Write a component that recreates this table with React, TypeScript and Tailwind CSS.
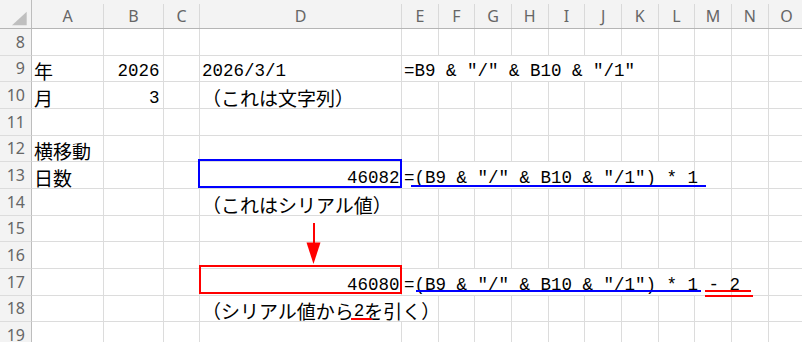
const MONO = "font-[family-name:'Liberation_Mono',monospace] text-[17.5px] leading-[20px]";
const JP = "font-[family-name:'Noto_Sans_CJK_JP',sans-serif] text-[19px] leading-[20px]";

const SPAN: Record<number, string> = {
  1: "col-span-1",
  2: "col-span-2",
  7: "col-span-7",
  8: "col-span-8",
  9: "col-span-9",
};

type Seg = { t: string; jp?: boolean };
type Cell = { span?: number; segs?: Seg[]; right?: string };

const m = (t: string): Seg => ({ t });
const j = (t: string): Seg => ({ t, jp: true });
const blank = (n: number): Cell[] => Array.from({ length: n }, () => ({}));

const letters = ["A", "B", "C", "D", "E", "F", "G", "H", "I", "J", "K", "L", "M", "N", "O"];

const rows: { n: number; cells: Cell[] }[] = [
  { n: 8, cells: blank(15) },
  {
    n: 9,
    cells: [
      { segs: [j("年")] },
      { segs: [m("2026")], right: "pr-[3.5px]" },
      {},
      { segs: [m("2026/3/1")] },
      { span: 7, segs: [m('=B9 & "/" & B10 & "/1"')] },
      ...blank(4),
    ],
  },
  {
    n: 10,
    cells: [
      { segs: [j("月")] },
      { segs: [m("3")], right: "pr-[3.5px]" },
      {},
      { segs: [j("（これは文字列）")] },
      ...blank(11),
    ],
  },
  { n: 11, cells: blank(15) },
  { n: 12, cells: [{ segs: [j("横移動")] }, ...blank(14)] },
  {
    n: 13,
    cells: [
      { segs: [j("日数")] },
      {},
      {},
      { segs: [m("46082")], right: "pr-[1.5px]" },
      { span: 8, segs: [m('=(B9 & "/" & B10 & "/1") * 1')] },
      ...blank(3),
    ],
  },
  { n: 14, cells: [...blank(3), { segs: [j("（これはシリアル値）")] }, ...blank(11)] },
  { n: 15, cells: blank(15) },
  { n: 16, cells: blank(15) },
  {
    n: 17,
    cells: [
      ...blank(3),
      { segs: [m("46080")], right: "pr-[1.5px]" },
      { span: 9, segs: [m('=(B9 & "/" & B10 & "/1") * 1 - 2')] },
      ...blank(2),
    ],
  },
  {
    n: 18,
    cells: [
      ...blank(3),
      { span: 2, segs: [j("（シリアル値から"), m("2"), j("を引く）")] },
      ...blank(10),
    ],
  },
  { n: 19, cells: blank(15) },
];

function SheetCell({ cell }: { cell: Cell }) {
  return (
    <div
      className={`${SPAN[cell.span ?? 1]} flex items-end whitespace-pre text-black border-r border-b border-[#dcdcdc] ${MONO} ${
        cell.right ? `justify-end ${cell.right}` : "pl-[2px]"
      }`}
    >
      {cell.segs?.map((s, i) => (
        <span key={i} className={s.jp ? JP : ""}>
          {s.t}
        </span>
      ))}
    </div>
  );
}

export default function App() {
  return (
    <div className="relative w-[802px] h-[342px] overflow-hidden bg-white">
      <div className="grid grid-cols-[32px_72px_60px_36px_202px_repeat(11,36.67px)] grid-rows-[29px_repeat(12,26.67px)]">
        {/* corner */}
        <div className="bg-[#f3f3f3] border-r border-r-[#bdbdbd] border-b border-b-[#b5b5b5]">
          <svg width="31" height="28" viewBox="0 0 31 28">
            <polygon points="12,25.3 26.7,25.3 26.7,11.7" fill="#bfbfbf" />
          </svg>
        </div>
        {letters.map((l) => (
          <div key={l} className="flex flex-col bg-[#f3f3f3] border-b border-[#b5b5b5]">
            <div className="h-[5px]" />
            <div className="flex-1 flex items-center justify-center border-r border-[#d9d9d9] text-[16px] text-[#666666] font-[family-name:'Noto_Sans',sans-serif]">
              {l}
            </div>
          </div>
        ))}

        {rows.map((r) => (
          <div key={r.n} className="contents">
            <div className="flex items-center justify-end pr-[6px] bg-[#f3f3f3] border-r border-r-[#bdbdbd] border-b border-b-[#dcdcdc] text-[16px] text-[#666666] font-[family-name:'Noto_Sans',sans-serif]">
              {r.n}
            </div>
            {r.cells.map((c, i) => (
              <SheetCell key={i} cell={c} />
            ))}
          </div>
        ))}
      </div>

      {/* annotations */}
      <div className="absolute left-[198px] top-[159px] w-[204px] h-[29px] border-2 border-[#0000ff]" />
      <div className="absolute left-[411px] top-[185px] w-[295px] h-[2px] bg-[#0000ff]" />

      <div className="absolute left-[312.5px] top-[223px] w-[2px] h-[24px] bg-[#ff0000]" />
      <svg className="absolute left-[306px] top-[242px]" width="16" height="23" viewBox="0 0 16 23">
        <polygon points="0.5,0.5 14.5,0.5 7.5,22" fill="#ff0000" />
      </svg>

      <div className="absolute left-[199px] top-[265px] w-[203px] h-[29px] border-2 border-[#ff0000]" />
      <div className="absolute left-[416px] top-[290px] w-[285px] h-[2px] bg-[#0000ff]" />
      <div className="absolute left-[705px] top-[290px] w-[46px] h-[2px] bg-[#ff0000]" />
      <div className="absolute left-[705px] top-[294.5px] w-[48px] h-[2px] bg-[#ff0000]" />
      <div className="absolute left-[351px] top-[317.5px] w-[21px] h-[2px] bg-[#ff0000]" />
    </div>
  );
}
